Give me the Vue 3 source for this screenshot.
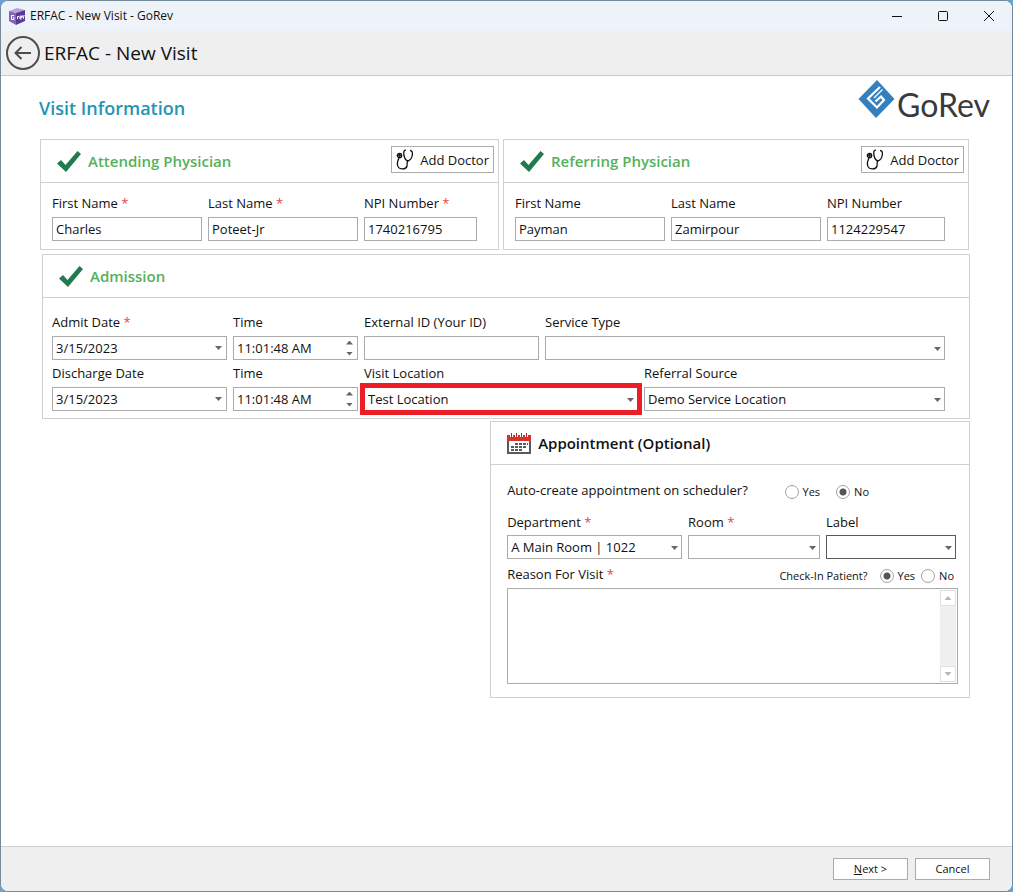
<script setup>
import { ref, reactive } from 'vue'

const physicians = [
  {
    id: 'attending',
    title: 'Attending Physician',
    required: true,
    fields: [
      { label: 'First Name', value: 'Charles' },
      { label: 'Last Name', value: 'Poteet-Jr' },
      { label: 'NPI Number', value: '1740216795' },
    ],
  },
  {
    id: 'referring',
    title: 'Referring Physician',
    required: false,
    fields: [
      { label: 'First Name', value: 'Payman' },
      { label: 'Last Name', value: 'Zamirpour' },
      { label: 'NPI Number', value: '1124229547' },
    ],
  },
]

const visit = reactive({
  admitDate: '3/15/2023',
  admitTime: '11:01:48 AM',
  dischargeDate: '3/15/2023',
  dischargeTime: '11:01:48 AM',
  externalId: '',
})
const autoCreate = ref('no')
const checkIn = ref('yes')
const reason = ref('')
</script>

<template>
  <div class="window">
    <header class="titlebar">
      <svg class="app-icon" viewBox="0 0 16 17" aria-hidden="true">
        <path d="M0 3 8 0l8 2-8 3z" fill="#b9a2dc" />
        <path d="M0 3l7 2v12l-7-4z" fill="#8464b4" />
        <path d="M7 5l9-3v11l-9 4z" fill="#5b3a94" />
        <path d="M5 7.500H2.500v4H5V9.500H4M8.500 11V8.500h1.500M11 9.500h1.500V8H11v3h1.500M13.500 7.500l.8 3 .8-3.500" fill="none" stroke="#fff" stroke-width="1" />
      </svg>
      <span class="titlebar-text">ERFAC - New Visit - GoRev</span>
      <div class="window-buttons">
        <button type="button" aria-label="Minimize">
          <svg viewBox="0 0 12 12"><path d="M1 6.500h10" /></svg>
        </button>
        <button type="button" aria-label="Maximize">
          <svg viewBox="0 0 12 12"><rect x="1.500" y="1.500" width="9" height="9" rx="1" /></svg>
        </button>
        <button type="button" aria-label="Close">
          <svg viewBox="0 0 12 12"><path d="M1 1l10 10M11 1L1 11" /></svg>
        </button>
      </div>
    </header>

    <div class="navbar">
      <button type="button" class="back" aria-label="Back">
        <svg viewBox="0 0 34 34">
          <circle cx="17" cy="17" r="16" fill="none" stroke="#4d4d4d" stroke-width="2" />
          <path d="M25 17H10M15.500 11l-6 6 6 6" fill="none" stroke="#4d4d4d" stroke-width="2" />
        </svg>
      </button>
      <h1>ERFAC - New Visit</h1>
    </div>

    <main class="content">
      <div class="heading">
        <h2>Visit Information</h2>
        <div class="logo">
          <svg viewBox="0 0 36 38" aria-hidden="true">
            <path d="M18.500 0 36 19 17.500 38 0 19z" fill="#347fbd" />
            <path d="M21.500 7 9.500 18.500l9 9 7-7.500-3-3.500-5.500 5" fill="none" stroke="#fff" stroke-width="2.200" />
            <path d="M24 9.500 15.500 18" fill="none" stroke="#fff" stroke-width="1.200" />
          </svg>
          <span>GoRev</span>
        </div>
      </div>

      <form class="panels" @submit.prevent>
        <div class="physicians">
          <section v-for="p in physicians" :key="p.id" class="panel">
            <div class="panel-head">
              <svg class="check" viewBox="0 0 24 21" aria-hidden="true">
                <path d="M0 12.500 4 9l4.500 5L20.500 0 24 3 9 21z" fill="#217a50" />
              </svg>
              <h3>{{ p.title }}</h3>
              <button type="button" class="add-doctor">
                <svg viewBox="0 0 18 21" aria-hidden="true">
                  <circle cx="3.500" cy="6.500" r="2.200" />
                  <circle cx="3.500" cy="6.500" r=".8" />
                  <path d="M3 9c-1.500 3-2 5-1.500 7 .8 5 8.500 5 9.500 1 .4-2-.5-3.500 1-5.500" />
                  <path d="M10 1.200C7.500 .8 7.500 4 8 6.500c.6 3 2 5 4 5.500 2.500-1 4-3.500 4.300-6 .3-2.500 0-4.500-2.300-4.500" />
                </svg>
                Add Doctor
              </button>
            </div>
            <div class="fields physician-fields" :class="p.id">
              <div v-for="(f, i) in p.fields" :key="f.label" class="field">
                <label :for="p.id + i">{{ f.label }} <b v-if="p.required">*</b></label>
                <input :id="p.id + i" v-model="f.value" class="box" type="text" />
              </div>
            </div>
          </section>
        </div>

        <section class="panel admission">
          <div class="panel-head">
            <svg class="check" viewBox="0 0 24 21" aria-hidden="true">
              <path d="M0 12.500 4 9l4.500 5L20.500 0 24 3 9 21z" fill="#217a50" />
            </svg>
            <h3>Admission</h3>
          </div>
          <div class="admission-body">
            <div class="fields first-row">
              <div class="field">
                <label for="admit-date">Admit Date <b>*</b></label>
                <div class="box combo">
                  <input id="admit-date" v-model="visit.admitDate" type="text" />
                  <button type="button" class="arrow" aria-label="Open calendar"></button>
                </div>
              </div>
              <div class="field">
                <label for="admit-time">Time</label>
                <div class="box combo">
                  <input id="admit-time" v-model="visit.admitTime" type="text" />
                  <div class="spin">
                    <button type="button" class="arrow up" aria-label="Later"></button>
                    <button type="button" class="arrow" aria-label="Earlier"></button>
                  </div>
                </div>
              </div>
              <div class="field">
                <label for="external-id">External ID (Your ID)</label>
                <input id="external-id" v-model="visit.externalId" class="box" type="text" />
              </div>
              <div class="field">
                <label for="service-type">Service Type</label>
                <div class="pick"><select id="service-type" class="box"><option></option></select></div>
              </div>
            </div>
            <div class="fields second-row">
              <div class="field">
                <label for="discharge-date">Discharge Date</label>
                <div class="box combo">
                  <input id="discharge-date" v-model="visit.dischargeDate" type="text" />
                  <button type="button" class="arrow" aria-label="Open calendar"></button>
                </div>
              </div>
              <div class="field">
                <label for="discharge-time">Time</label>
                <div class="box combo">
                  <input id="discharge-time" v-model="visit.dischargeTime" type="text" />
                  <div class="spin">
                    <button type="button" class="arrow up" aria-label="Later"></button>
                    <button type="button" class="arrow" aria-label="Earlier"></button>
                  </div>
                </div>
              </div>
              <div class="field">
                <label for="visit-location">Visit Location</label>
                <div class="pick highlighted">
                  <select id="visit-location" class="box"><option>Test Location</option></select>
                </div>
              </div>
              <div class="field">
                <label for="referral">Referral Source</label>
                <div class="pick">
                  <select id="referral" class="box"><option>Demo Service Location</option></select>
                </div>
              </div>
            </div>
          </div>
        </section>

        <section class="panel appointment">
          <div class="panel-head">
            <svg class="calendar" viewBox="0 0 24 21" aria-hidden="true">
              <path d="M1 7v13h22V7" fill="#fff" stroke="#555b61" stroke-width="2" />
              <path d="M0 2h24v6H0z" fill="#d3322d" />
              <path d="M4.500 0v4M9.500 0v4M14.500 0v4M19.500 0v4" stroke="#fff" stroke-width="3" />
              <path d="M4.500 0v4M9.500 0v4M14.500 0v4M19.500 0v4" stroke="#b52a26" stroke-width="1" />
              <path d="M8 11h13M4 14h16M4 17h12" stroke="#555b61" stroke-width="2" stroke-dasharray="3 1" />
            </svg>
            <h3>Appointment (Optional)</h3>
          </div>
          <div class="appointment-body">
            <div class="line">
              <span id="auto-q">Auto-create appointment on scheduler?</span>
              <div class="radios wide" role="radiogroup" aria-labelledby="auto-q">
                <label><input v-model="autoCreate" type="radio" name="auto" value="yes" />Yes</label>
                <label><input v-model="autoCreate" type="radio" name="auto" value="no" />No</label>
              </div>
            </div>
            <div class="fields appointment-fields">
              <div class="field">
                <label for="department">Department <b>*</b></label>
                <div class="pick"><select id="department" class="box"><option>A Main Room | 1022</option></select></div>
              </div>
              <div class="field">
                <label for="room">Room <b>*</b></label>
                <div class="pick"><select id="room" class="box"><option></option></select></div>
              </div>
              <div class="field">
                <label for="label">Label</label>
                <div class="pick"><select id="label" class="box dark"><option></option></select></div>
              </div>
            </div>
            <div class="line">
              <label for="reason">Reason For Visit <b>*</b></label>
              <div class="radios" role="radiogroup" aria-labelledby="checkin-q">
                <span id="checkin-q">Check-In Patient?</span>
                <label><input v-model="checkIn" type="radio" name="checkin" value="yes" />Yes</label>
                <label><input v-model="checkIn" type="radio" name="checkin" value="no" />No</label>
              </div>
            </div>
            <div class="memo">
              <textarea id="reason" v-model="reason"></textarea>
              <div class="scrollbar">
                <button type="button" class="arrow up" aria-label="Scroll up"></button>
                <button type="button" class="arrow" aria-label="Scroll down"></button>
              </div>
            </div>
          </div>
        </section>
      </form>
    </main>

    <footer class="footer">
      <button type="button"><u>N</u>ext &gt;</button>
      <button type="button">Cancel</button>
    </footer>
  </div>
</template>

<style>
body {
  background: #68a4d0;
}
</style>

<style scoped>
* {
  box-sizing: border-box;
}
.window {
  display: flex;
  flex-direction: column;
  min-height: 100vh;
  overflow: hidden;
  border: 1px solid #74899c;
  border-radius: 8px;
  background: #fff;
  color: #111;
  font: 13px/20px "Segoe UI", "Open Sans", "Noto Sans", sans-serif;
}
button,
input,
select,
textarea {
  margin: 0;
  padding: 0;
  border: 0;
  border-radius: 0;
  background: none;
  color: inherit;
  font: inherit;
}
input:focus,
select:focus,
textarea:focus {
  outline: none;
}
h1,
h2,
h3 {
  margin: 0;
}
.titlebar {
  display: flex;
  align-items: center;
  height: 30px;
  padding-left: 8px;
  background: #eef3fa;
  font-size: 12px;
}
.app-icon {
  width: 16px;
  height: 17px;
  margin-right: 5px;
}
.window-buttons {
  display: flex;
  margin-left: auto;
}
.window-buttons button {
  display: grid;
  place-items: center;
  width: 46px;
  height: 28px;
}
.window-buttons svg {
  width: 12px;
  height: 12px;
  fill: none;
  stroke: #111;
}
.navbar {
  display: flex;
  align-items: center;
  gap: 4px;
  height: 45px;
  padding-left: 5px;
  border-bottom: 1px solid #c9c9c9;
  background: #efefef;
}
.back,
.back svg {
  display: block;
  width: 34px;
  height: 34px;
}
h1 {
  font-size: 19px;
  font-weight: 400;
  line-height: 26px;
}
.content {
  flex: 1;
}
.heading {
  display: flex;
  align-items: center;
  justify-content: space-between;
  height: 63px;
  padding: 0 22px 0 38px;
}
h2 {
  color: #2594b3;
  font-size: 18px;
  font-weight: 600;
}
.logo {
  display: flex;
  align-self: flex-start;
  align-items: flex-start;
  gap: 2px;
  padding-top: 4px;
}
.logo svg {
  width: 37px;
  height: 38px;
}
.logo span {
  color: #3a3a3c;
  font-family: Lato, sans-serif;
  font-size: 32px;
  line-height: 50px;
}
.panels {
  display: flex;
  flex-direction: column;
  padding: 0 42px 20px 39px;
}
.physicians {
  display: grid;
  grid-template-columns: 459fr 466fr;
  gap: 4px;
  margin-right: 1px;
}
.panel {
  border: 1px solid #d0d0d0;
}
.panel-head {
  display: flex;
  align-items: center;
  gap: 7px;
  height: 43px;
  padding: 0 4px 0 16px;
  border-bottom: 1px solid #d0d0d0;
}
.check,
.calendar {
  width: 24px;
  height: 21px;
}
h3 {
  color: #55b15b;
  font-size: 15px;
  font-weight: 600;
}
.add-doctor {
  display: flex;
  align-items: center;
  align-self: flex-start;
  gap: 6px;
  height: 27px;
  margin: 6px 0 0 auto;
  padding: 0 4px;
  border: 1px solid #ababab;
}
.add-doctor svg {
  width: 18px;
  height: 21px;
  fill: none;
  stroke: #111;
  stroke-width: 1.3;
}
.fields {
  display: grid;
  gap: 6px;
}
.field {
  display: flex;
  flex-direction: column;
  gap: 4px;
  min-width: 0;
}
b {
  color: #e04848;
  font-weight: 400;
}
.box {
  width: 100%;
  height: 24px;
  padding: 0 3px;
  border: 1px solid #ababab;
  background: #fff;
}
.physician-fields {
  padding: 10px 21px 8px 11px;
}
.attending {
  grid-template-columns: 150fr 150fr 113fr;
}
.referring {
  grid-template-columns: 150fr 150fr 118fr;
  padding-right: 23px;
}
.admission {
  margin: 4px 0 2px 2px;
}
.admission-body {
  display: grid;
  gap: 3px;
  padding: 14px 24px 7px 9px;
}
.first-row {
  grid-template-columns: 175fr 125fr 175fr 400fr;
}
.second-row {
  grid-template-columns: 175fr 125fr 274fr 301fr;
}
.combo {
  display: flex;
  padding-right: 0;
}
.combo input {
  flex: 1;
  min-width: 0;
}
.arrow {
  display: grid;
  place-items: center;
  width: 15px;
}
.arrow::before,
.pick::after {
  content: "";
  width: 7px;
  height: 4px;
  background: #666;
  clip-path: polygon(0 0, 100% 0, 50% 100%);
}
.arrow.up::before {
  clip-path: polygon(50% 0, 100% 100%, 0 100%);
}
.spin {
  display: grid;
}
.pick {
  position: relative;
}
.pick::after {
  position: absolute;
  top: 11px;
  right: 4px;
  pointer-events: none;
}
.pick select {
  display: block;
  appearance: none;
}
.highlighted {
  outline: 5px solid #ee1c25;
  outline-offset: -1px;
}
.dark {
  border-color: #5a5a5a;
}
.appointment {
  align-self: flex-end;
  width: 51.6%;
}
.appointment h3 {
  color: #111;
}
.appointment-body {
  padding: 15px 11px 13px 16px;
}
.line {
  display: flex;
  align-items: center;
  justify-content: space-between;
}
.radios {
  display: flex;
  gap: 6px;
  height: 20px;
  padding: 4px 4px 0 0;
  font-size: 11px;
  line-height: 16px;
}
.radios span {
  margin-right: 6px;
}
.wide {
  gap: 16px;
  padding-right: 89px;
}
.radios label {
  display: flex;
  align-items: center;
  gap: 4px;
}
.radios input {
  width: 14px;
  height: 14px;
  border: 1px solid #a0a0a0;
  border-radius: 50%;
  appearance: none;
}
.radios input:checked {
  background: radial-gradient(circle, #555 0 3px, #fff 4px);
}
.appointment-fields {
  grid-template-columns: 175fr 132fr 130fr;
  margin: 12px 2px 5px 0;
}
.appointment-fields .field {
  gap: 3px;
}
.memo {
  display: flex;
  height: 96px;
  margin-top: 4px;
  padding: 1px;
  border: 1px solid #ababab;
}
.memo textarea {
  flex: 1;
  min-width: 0;
  padding: 2px;
  resize: none;
}
.scrollbar {
  display: flex;
  flex-direction: column;
  justify-content: space-between;
  width: 16px;
  background: #efefef;
}
.scrollbar .arrow {
  width: 16px;
  height: 16px;
  border: 1px solid #e0e0e0;
  background: #fff;
}
.scrollbar .arrow::before {
  background: #b5b5b5;
}
.footer {
  display: flex;
  align-items: center;
  justify-content: flex-end;
  gap: 7px;
  height: 45px;
  padding-right: 22px;
  border-top: 1px solid #d0d0d0;
  background: #efefef;
}
.footer button {
  width: 75px;
  height: 22px;
  border: 1px solid #ababab;
  background: #fff;
  font-size: 11px;
}
</style>
